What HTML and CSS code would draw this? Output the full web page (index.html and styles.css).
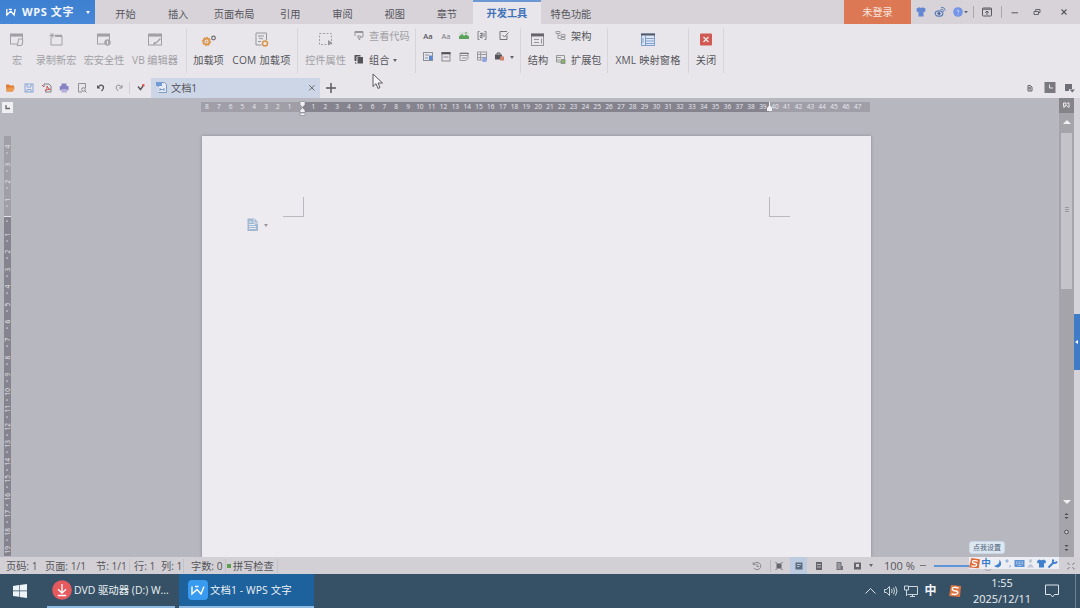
FILE: index.html
```html
<!DOCTYPE html>
<html lang="zh-CN">
<head>
  <meta charset="UTF-8">
  <meta name="viewport" content="width=device-width, initial-scale=1.0">
  <title>文档1 - WPS 文字</title>
  <link rel="stylesheet" href="styles.css">
</head>
<body>
  <div class="app">
    <!-- Title bar -->
    <header class="title-bar">
      <div class="app-button">
        <svg class="app-logo" width="10" height="9" viewBox="0 0 10 9"><path d="M.8 1v6l4-3.700 3.300 3.700L9.200 1M2.800 1.400h3" /></svg>
        <span class="app-name">WPS 文字</span>
        <i class="caret"></i>
      </div>
      <nav class="menu">
        <a class="menu-item">开始</a>
        <a class="menu-item">插入</a>
        <a class="menu-item wide">页面布局</a>
        <a class="menu-item">引用</a>
        <a class="menu-item">审阅</a>
        <a class="menu-item">视图</a>
        <a class="menu-item">章节</a>
        <a class="menu-item active">开发工具</a>
        <a class="menu-item last">特色功能</a>
      </nav>
      <div class="login">未登录</div>
      <div class="window-tools">
        <svg class="shirt" width="20" height="12" viewBox="0 0 20 12"><path d="M5.500 2.500L8.500 1.300q1.500 1.500 3 0L14.500 2.500l-.4 3.500-1.600-.3V10.500h-5V5.700L5.900 6z" fill="#6286d2"/></svg>
        <svg width="18" height="12" viewBox="0 0 18 12" fill="none" stroke="#5c7fb8"><ellipse cx="8" cy="7.500" rx="3.800" ry="2.700" stroke-width="1.300"/><circle cx="8" cy="7.500" r="1.200" fill="#456"/><path d="M9.500 3.500q3-1 3 2.200M10 1.500q4-.5 4 3.200"/></svg>
        <svg width="24" height="12" viewBox="0 0 24 12"><circle cx="9" cy="6" r="4.800" fill="#7295e8"/><path d="M7.700 4.800q1.300-1.800 2.300 0 .2.800-1 1.600V7M9 8v1" fill="none" stroke="#d6e0fa" stroke-width=".8"/><path d="M15 5h4l-2 2.300z" fill="#66646c"/></svg>
        <i class="tool-sep"></i>
        <svg width="27" height="12" viewBox="0 0 27 12" fill="none" stroke="#5a5960"><rect x="8.500" y="2" width="9" height="8" rx=".8"/><path d="M8.500 3.200h9M13 9V5M11.200 6.700l1.800-1.700 1.800 1.700"/></svg>
        <i class="tool-sep"></i>
        <svg width="24" height="12" viewBox="0 0 24 12"><path d="M9.500 6.800H16" stroke="#5a5960"/></svg>
        <svg width="23" height="12" viewBox="0 0 23 12" fill="none" stroke="#5a5960" stroke-width=".9"><path d="M8 5.500h4.500v3H8zM9.700 5.300V3.500h4.300v3h-1.300"/></svg>
        <svg width="30" height="12" viewBox="0 0 30 12"><path d="M12.500 3.500l5 5M17.500 3.500l-5 5" stroke="#55545b" stroke-width="1.100"/></svg>
      </div>
    </header>

    <!-- Ribbon -->
    <section class="ribbon">
      <div class="group macro-group disabled">
        <div class="big-button">
          <svg width="16" height="16" viewBox="0 0 16 16" fill="none" stroke="#a1a0a6"><rect x="1.500" y="2" width="12" height="10"/><path d="M1.500 3.300h12" stroke-width="2.600"/><path d="M9.500 7h4q1 3-1 6.500H8q1.300-2 1.500-6.500z" fill="#e8e6ea"/></svg>
          <span>宏</span>
        </div>
        <div class="big-button record">
          <svg width="16" height="16" viewBox="0 0 16 16" fill="none" stroke="#a1a0a6"><path d="M3 6v7h11V4H8"/><path d="M7 3.800h7" stroke-width="2.200"/><path d="M4 1v5M1.500 3.500h5M2.200 1.700l3.600 3.600M5.800 1.700L2.200 5.300" stroke-width=".9"/></svg>
          <span>录制新宏</span>
        </div>
        <div class="big-button security">
          <svg width="16" height="16" viewBox="0 0 16 16" fill="none" stroke="#a1a0a6"><rect x="1.500" y="2" width="12" height="10"/><path d="M1.500 3.300h12" stroke-width="2.600"/><circle cx="11.500" cy="10.500" r="2.800" fill="#aaa9af"/><path d="M11.500 8.800v3.400" stroke="#e8e6ea"/></svg>
          <span>宏安全性</span>
        </div>
        <div class="big-button editor">
          <svg width="16" height="16" viewBox="0 0 16 16" fill="none" stroke="#a1a0a6"><rect x="1.500" y="2" width="13" height="11"/><path d="M1.500 3.300h13" stroke-width="2.600"/><path d="M13.500 6.500L9 11l-2 1 .7-2" stroke-width="1.300"/></svg>
          <span>VB 编辑器</span>
        </div>
      </div>

      <div class="group addin-group">
        <div class="big-button addin">
          <svg width="16" height="16" viewBox="0 0 16 16" fill="none"><circle cx="5.500" cy="9.500" r="3" stroke="#da954b" stroke-width="1.800"/><circle cx="5.500" cy="9.500" r="4.200" stroke="#da954b" stroke-width="1" stroke-dasharray="1.600 1.600"/><circle cx="5.500" cy="9.500" r="1" fill="#da954b"/><circle cx="12.500" cy="6" r="1.800" stroke="#6d6c73" stroke-width="1.200"/></svg>
          <span>加载项</span>
        </div>
        <div class="big-button com">
          <svg width="16" height="16" viewBox="0 0 16 16" fill="none" stroke="#96959b"><path d="M2 1h10.500v7M2 1v12h5.500M4 4h6M4 9.500h3"/><path d="M5 6l4 1"/><circle cx="11" cy="11.500" r="2.500" stroke="#da954b" stroke-width="1.500"/></svg>
          <span>COM 加载项</span>
        </div>
      </div>

      <div class="group control-group">
        <div class="big-button property disabled">
          <svg width="16" height="16" viewBox="0 0 16 16" fill="none" stroke="#a1a0a6"><rect x="1.500" y="1.500" width="12" height="11" stroke-dasharray="2 1.500"/><path d="M10 8l4.500 3-4.500 2.500z" fill="#96959b" stroke="none"/></svg>
          <span>控件属性</span>
        </div>
        <div class="small-list">
          <div class="small-button disabled">
            <svg width="12" height="12" viewBox="0 0 12 12" fill="none" stroke="#96959b"><path d="M2 6V1.500h8v5.500H8M2 2.500h8"/><path d="M4.500 6h3l-1 4z"/></svg>
            <span>查看代码</span>
          </div>
          <div class="small-button">
            <svg width="12" height="12" viewBox="0 0 12 12"><path d="M1.500 1h6v1.500H3.500V7h-2z" fill="#55545b"/><path d="M4.500 3H10v6.500H4.500z" fill="#55545b"/><path d="M2.500 8v1.500h1" stroke="#77767d" fill="none"/></svg>
            <span>组合</span>
            <i class="caret dark"></i>
          </div>
        </div>
      </div>

      <div class="group widget-group">
        <div class="widget-row">
          <span class="aa strong">Aa</span>
          <span class="aa">Aa</span>
          <svg width="12" height="12" viewBox="0 0 12 12"><path d="M1.500 2h9v7h-9z" fill="#d8dedb"/><path d="M1 9V6.500L4 4l2 2 2-1.500 3 2V9z" fill="#59a35a"/><circle cx="8" cy="2.800" r="1" fill="#8ab07f"/></svg>
          <svg width="12" height="12" viewBox="0 0 12 12" fill="none" stroke="#77767d"><path d="M3.500 1.500h-1.500v8h1.500M8.500 1.500H10v8H8.500M4 3.500h2v2H4.200v2H6M6 2.500v6M8 3v4" stroke-width=".9"/></svg>
          <svg class="check" width="12" height="12" viewBox="0 0 12 12" fill="none" stroke="#67666d"><path d="M9 5.500v4H2v-8h7M4.500 5l2 2 4-4.500" stroke-width=".9"/></svg>
        </div>
        <div class="widget-row">
          <svg width="12" height="12" viewBox="0 0 12 12" fill="none" stroke="#8a9199"><rect x="1.500" y="1.500" width="9" height="8"/><path d="M3 4h4M3 7h3"/><path d="M7 4.500h3.500V9H7z" fill="#5c89d3" stroke="none"/></svg>
          <svg width="12" height="12" viewBox="0 0 12 12" fill="none" stroke="#8a898f"><rect x="2" y="2" width="8" height="8"/><path d="M1.500 2.200h9" stroke="#55545b" stroke-width="2.200"/><path d="M3.500 6h5"/></svg>
          <svg width="12" height="12" viewBox="0 0 12 12" fill="none" stroke="#99989e"><path d="M2 2h8v5.500L8 9.500H2zM2 4.500h8M4 7h5"/><path d="M2 2.500h9" stroke="#77767d"/></svg>
          <svg width="12" height="12" viewBox="0 0 12 12" fill="none" stroke="#99989e"><rect x="1.500" y="1" width="9" height="8"/><path d="M1.500 3.500h9M1.500 6.500h9M4.500 1v8"/><path d="M6.500 6.500h4v4.500h-4z" fill="#8ea5e0" stroke="none"/></svg>
          <svg class="tools" width="12" height="12" viewBox="0 0 12 12"><path d="M1 3.500h7v5H1z" fill="#55545b"/><path d="M3 3.500V2h3v1.500" fill="none" stroke="#55545b"/><path d="M6 5.500h4v4H6z" fill="#cf8068"/></svg>
          <i class="caret dark"></i>
        </div>
      </div>

      <div class="group schema-group">
        <div class="big-button structure">
          <svg width="16" height="16" viewBox="0 0 16 16" fill="none" stroke="#96959b"><rect x="1.500" y="2" width="12" height="11.500"/><path d="M1 3h13" stroke="#66656c" stroke-width="2.800"/><path d="M4 7.500h5M4 10.500h5M11.500 6.500v5"/></svg>
          <span>结构</span>
        </div>
        <div class="small-list">
          <div class="small-button">
            <svg width="12" height="12" viewBox="0 0 12 12" fill="none" stroke="#96959b" stroke-width=".9"><path d="M1 1.500h4v2H1zM3 3.500v5h3M3 5.500h2M6 4.500h4v2H6zM6 7.500h4v2H6z"/></svg>
            <span>架构</span>
          </div>
          <div class="small-button">
            <svg width="12" height="12" viewBox="0 0 12 12" fill="none" stroke="#8b9089" stroke-width=".9"><path d="M6 8H1.500V1.500h8V5M2 3.500h4M2 6h3"/><path d="M6 5.500h4v4H6z" fill="#85b165"/></svg>
            <span>扩展包</span>
          </div>
        </div>
      </div>

      <div class="group xml-group">
        <div class="big-button">
          <svg width="16" height="16" viewBox="0 0 16 16" fill="none" stroke="#7f9fce"><rect x="1.500" y="2" width="13" height="11.500" fill="#dfe6f3"/><path d="M1 2.500h14" stroke="#515968" stroke-width="2"/><path d="M5.500 4v9M6 6.500h8M6 9h8M6 11.500h8M3 6v5"/></svg>
          <span>XML 映射窗格</span>
        </div>
      </div>
      <div class="group close-group">
        <div class="big-button">
          <svg width="16" height="16" viewBox="0 0 16 16"><rect x="2" y="1.500" width="12" height="12" rx="1" fill="#d05a52"/><path d="M5.500 5l5 5M10.500 5l-5 5" stroke="#f0e6e8" stroke-width="1.400"/></svg>
          <span>关闭</span>
        </div>
      </div>
    </section>

    <!-- Quick access and document tabs -->
    <section class="tab-row">
      <div class="quick-access">
        <svg width="18" height="12" viewBox="0 0 18 12"><path d="M5 2.500h3l1 1h4v2l-2 4H5.500z" fill="#dc7c35"/><path d="M7 5.500h7l-2 4H5.500z" fill="#eb9a4e"/></svg>
        <svg width="18" height="12" viewBox="0 0 18 12" fill="none" stroke="#8aa6da"><rect x="6" y="2" width="8" height="8"/><path d="M8 2v3h4V2M8 10V7.500h4V10"/></svg>
        <svg width="18" height="12" viewBox="0 0 18 12" fill="none" stroke="#77767d" stroke-width=".9"><path d="M7 5V2h5l2 2v6H8"/><path d="M8 9q3-3 2-5 1 3 3.500 3.500Q10 7 8 9M5 3l2 2" stroke="#bf4b49"/></svg>
        <svg width="18" height="12" viewBox="0 0 18 12"><path d="M6.500 1.500h5v2.500h-5zM4.800 4h8.700v4.300H4.800z" fill="#8681c2"/><path d="M6.500 7H12v3.500H6.500z" fill="#b4aedd"/></svg>
        <svg width="18" height="12" viewBox="0 0 18 12" fill="none" stroke="#85848a"><path d="M12.500 6V1.500h-7v8.500H9" stroke-width=".9"/><circle cx="10.500" cy="7.500" r="1.800"/><path d="M12 9l1.500 1.500"/></svg>
        <svg width="18" height="12" viewBox="0 0 18 12" fill="none" stroke="#55545b" stroke-width="1.300"><path d="M7 5.500q2.500-4 5-1.500 1.500 2-1.500 5"/><path d="M6 3v3.500h3.500z" fill="#55545b" stroke="none"/></svg>
        <svg width="18" height="12" viewBox="0 0 18 12" fill="none" stroke="#8f8e95"><path d="M12.500 5.500q-2.500-4-5-1.500-1.500 2 1.500 5M13 3v3h-3"/></svg>
      </div>
      <div class="check-tool">
        <svg width="12" height="12" viewBox="0 0 12 12"><path d="M4 4.500l2.500 3L9 4" fill="none" stroke="#55545b" stroke-width="1.400"/><circle cx="9.300" cy="3.200" r="1.300" fill="#d9504c"/></svg>
      </div>
      <div class="doc-tab">
        <svg width="13" height="13" viewBox="0 0 13 13" fill="none" stroke="#7d9ac4"><path d="M3.500 6V1.500h6l2 2v8h-8" fill="#e6ebf4"/><path d="M1 1h6v4H1z" fill="#709bd5" stroke="none"/><path d="M5 7v3M5 8.500h4M9 7v3"/></svg>
        <span class="doc-name">文档1</span>
        <svg class="doc-close" width="8" height="8" viewBox="0 0 8 8"><path d="M1.200 1.200l5.200 5.200M6.400 1.200L1.200 6.400" stroke="#66656c"/></svg>
      </div>
      <svg class="new-tab" width="12" height="12" viewBox="0 0 12 12"><path d="M6 1v10M1 6h10" stroke="#5b5a61" stroke-width="1.500"/></svg>
      <div class="tab-tools">
        <svg width="20" height="12" viewBox="0 0 20 12" fill="none" stroke="#66656c"><path d="M8 3.500h2.500L12 5v4H8zM8 6h3M10 4.500v4"/></svg>
        <svg width="20" height="12" viewBox="0 0 20 12"><path d="M4.500 0h11v11h-11z" fill="#7a7980"/><path d="M9.500 2.500V6h3.500" fill="none" stroke="#e4e3e8"/></svg>
        <svg width="20" height="12" viewBox="0 0 20 12" fill="#6f6e76"><path d="M5 2h7v5H9v2H5zM9.500 7.500h5.500l-2.700 3z"/></svg>
      </div>
    </section>

    <!-- Workspace -->
    <main class="workspace">
      <aside class="left-column">
        <div class="tab-stop"><svg width="11" height="11" viewBox="0 0 11 11"><path d="M4 3v3.500h4" fill="none" stroke="#66656c" stroke-width="1.300"/></svg></div>
        <div class="v-ruler" id="vRuler"></div>
      </aside>
      <div class="canvas">
        <div class="h-ruler">
          <div class="ruler-margin" id="rulerLeft"></div>
          <div class="ruler-text" id="rulerText"></div>
          <div class="ruler-margin right" id="rulerRight"></div>
          <svg class="indent-left" width="7" height="15" viewBox="0 0 7 15" fill="#f1f0f4" stroke="#77767f" stroke-width=".5"><path d="M1 .5h5v3L3.500 6.500 1 3.500zM3.500 6.500L6 9.500v2H1v-2zM1 12h5v2.500H1z"/></svg>
          <svg class="indent-right" width="7" height="9" viewBox="0 0 7 9" fill="#f1f0f4"><path d="M3.500 3L6 6v3H1V6zM3 0h1v4H3z"/></svg>
        </div>
        <div class="page">
          <div class="corners">
            <i class="corner left"></i>
            <i class="corner right"></i>
          </div>
          <div class="paste-hint">
            <svg width="12" height="14" viewBox="0 0 12 14"><path d="M.5.5H7.500L11 4v9H.5z" fill="#a3b9d2"/><path d="M2 4h3M2 6.500h6M2 8.500h7M2 10.500h7M7 1v4h4" fill="none" stroke="#edf0f5" stroke-width=".9"/></svg>
            <i class="caret hint"></i>
          </div>
        </div>
      </div>
      <div class="scroll-bar">
        <div class="scroll-top"><svg width="9" height="9" viewBox="0 0 9 9" fill="none" stroke="#eeedf1"><path d="M1.500 2h2.500v3H1.500zM5 2h2v4.500M4.500 4.500l2 2M2 5v2"/></svg></div>
        <div class="scroll-arrow up"></div>
        <div class="thumb"><i></i><i></i><i></i></div>
        <div class="scroll-arrow down"></div>
        <div class="browse">
          <svg width="7" height="8" viewBox="0 0 7 8" fill="#4d4c53"><path d="M3.500 1l2 2h-4zM3.500 7l-2-2h4z"/></svg>
          <svg width="7" height="8" viewBox="0 0 7 8"><circle cx="3.500" cy="4" r="1.800" fill="#d3d2d7" stroke="#4d4c53"/></svg>
          <svg width="7" height="8" viewBox="0 0 7 8" fill="#4d4c53"><path d="M3.500 3l-2-2h4zM3.500 7l-2-2h4z"/></svg>
        </div>
      </div>
      <div class="side-strip"><div class="side-handle"><svg width="6" height="6" viewBox="0 0 6 6"><path d="M1 3l3-2v4z" fill="#fff"/></svg></div></div>
    </main>

    <!-- Status bar -->
    <footer class="status-bar">
      <div class="status-info">
        <span class="page-no">页码: 1</span>
        <span class="page-total">页面: 1/1</span>
        <span class="section-no">节: 1/1</span>
        <span class="row-no">行: 1</span>
        <span class="col-no">列: 1</span>
        <span class="words">字数: 0</span>
        <span class="spell"><i class="green-dot"></i>拼写检查</span>
      </div>
      <div class="view-tools">
        <svg class="history" width="25" height="12" viewBox="0 0 25 12" fill="none" stroke="#85848a"><path d="M8 4a4 3.800 0 1 1 0 4M7.500 2v2.500H10M11.500 3.500V6.500h2"/></svg>
        <svg width="19" height="12" viewBox="0 0 19 12"><path d="M5.500 3.500h5v5h-5z" fill="#66656c"/><path d="M4.500 2l1.500 1.500M11.500 2L10 3.500M4.500 10L6 8.500M11.500 10L10 8.500" stroke="#66656c"/></svg>
        <div class="view-active"><svg width="12" height="12" viewBox="0 0 12 12"><path d="M2.500 2.500h7v7h-7z" fill="#5a6b80"/><path d="M4 4.500h4M4 6.500h2.500" stroke="#c9d7ea" stroke-width=".8"/></svg></div>
        <svg width="23" height="12" viewBox="0 0 23 12"><path d="M9 2h6v8H9z" fill="#66656c"/><path d="M10 4.500h4M10 7h4" stroke="#d0ced4" stroke-width=".8"/></svg>
        <svg width="18" height="12" viewBox="0 0 18 12"><path d="M6.500 2h5v4H13v4H6.500z" fill="#76757c"/><path d="M7.500 4h3M7.500 6h3M7.500 8h3" stroke="#d0ced4" stroke-width=".8"/></svg>
        <svg width="18" height="12" viewBox="0 0 18 12"><path d="M6 2.500h7v7H6z" fill="#66656c"/><path d="M8 4h3v3H8z" fill="#d6d4da"/></svg>
        <i class="caret dark"></i>
        <span class="zoom-value">100 %</span>
        <span class="zoom-out"></span>
        <span class="zoom-line"></span>
        <span class="zoom-knob"></span>
        <svg class="zoom-end" width="10" height="10" viewBox="0 0 10 10"><path d="M1.500 2l2 1.500M8.500 2l-2 1.500M1.500 8l2-1.500M8.500 8l-2-1.500" stroke="#69686f"/></svg>
      </div>
    </footer>

    <!-- Windows taskbar -->
    <footer class="taskbar">
      <div class="start"><svg width="14" height="14" viewBox="0 0 14 14" fill="#edf3f7"><path d="M0 2l6-.9v5.500H0zM6.600 1L14 0v6.600H6.600zM0 7.300h6v5.500L0 12zM6.600 7.300H14V14l-7.400-1z"/></svg></div>
      <div class="task">
        <svg width="20" height="20" viewBox="0 0 20 20"><circle cx="10" cy="10" r="9.800" fill="#e65a5e"/><path d="M10 4v9M6 9.200l4 3.800 4-3.800M5.800 15.500h8.400" fill="none" stroke="#fff" stroke-width="1.300"/></svg>
        <span>DVD 驱动器 (D:) W...</span>
      </div>
      <div class="task active">
        <svg width="20" height="20" viewBox="0 0 20 20"><rect width="20" height="20" rx="4" fill="#389bf0"/><path d="M4 6.500v7.500l5-4.500 4 4.500 3-7.500M7 6.500h3.500" fill="none" stroke="#fff" stroke-width="1.400"/></svg>
        <span>文档1 - WPS 文字</span>
      </div>
      <div class="tray">
        <svg width="20" height="16" viewBox="0 0 20 16"><path d="M5.500 10.500l5-5 5 5" fill="none" stroke="#dce5ec"/></svg>
        <svg width="20" height="16" viewBox="0 0 20 16" fill="none" stroke="#dce5ec" stroke-width=".9"><path d="M4.500 6.500h2l3-3v9l-3-3h-2zM11.500 6q1.300 2 0 4M13.500 4.700q2 3.300 0 6.600M15.500 3.500q3 4.500 0 9"/></svg>
        <svg width="21" height="16" viewBox="0 0 21 16" fill="none" stroke="#dce5ec" stroke-width=".9"><path d="M8 3.500h9.500v8H7.500M12.500 11.500v2M10 13.500h5M4.500 3h4v4h-4zM6.500 7v6"/></svg>
        <span class="ime-mode">中</span>
        <svg class="sogou" width="14" height="14" viewBox="0 0 14 14"><path d="M3 1l10 1-1 11-11-1z" fill="#de743f"/><path d="M10.500 4Q4 2 4.300 5.500 5 7 8 7q2.500.5 1.500 2.500Q8 11 3.500 10" fill="none" stroke="#fff" stroke-width="1.500"/></svg>
        <div class="clock"><span>1:55</span><span>2025/12/11</span></div>
        <svg class="notice" width="16" height="16" viewBox="0 0 16 16"><path d="M1.500 2h13v9.500H10.500L8.500 14l-2-2.500h-5z" fill="none" stroke="#dce5ec"/></svg>
        <i class="show-desktop"></i>
      </div>
    </footer>

    <!-- Input method bar floats over the status bar -->
    <div class="ime-tip">点我设置</div>
    <div class="ime-bar">
      <svg width="11" height="11" viewBox="0 0 14 14"><path d="M3 0l11 1.500L12.500 13 0 12z" fill="#de6b36"/><path d="M11 4Q4 2 4.300 5.500 5 7 8 7q2.500.5 1.500 2.500Q8 11 3 10" fill="none" stroke="#fff" stroke-width="1.600"/></svg>
      <span>中</span>
      <svg width="11" height="11" viewBox="0 0 11 11"><path d="M7.500 1.500q.5 5-5.500 6.500 3 2.500 6 .5 2.500-3-.5-7z" fill="#4582ce"/></svg>
      <svg width="11" height="11" viewBox="0 0 11 11" fill="none" stroke="#78a3d8"><circle cx="4" cy="3" r="1.100"/><path d="M7 7q1 1-.5 2.500"/></svg>
      <svg width="11" height="11" viewBox="0 0 11 11"><rect x=".5" y="2" width="10" height="7" fill="#5b91d2"/><path d="M2 4h7M2 5.700h7M3.500 7.500h4" stroke="#e3ecf7" stroke-width=".7" stroke-dasharray="1 .5"/></svg>
      <svg width="11" height="11" viewBox="0 0 11 11" fill="#bfc7d6"><circle cx="5.500" cy="3" r="1.700"/><path d="M2 9.500q3.500-7 7 0z"/></svg>
      <svg width="11" height="11" viewBox="0 0 11 11"><path d="M1 3l2.500-1.500q2 1.500 4 0L10 3 9.500 5.500 8 5v4.500H3V5l-1.500.5z" fill="#3f7fcb"/></svg>
      <svg width="11" height="11" viewBox="0 0 11 11" fill="none" stroke="#3f7fcb" stroke-width="1.900"><path d="M1.500 9.500l5-5M6.500 1.500q-1.500 3 .5 3.500 2 .5 3-1.500" /></svg>
    </div>

    <svg class="cursor" width="12" height="17" viewBox="0 0 12 17"><path d="M1 1v12.500l3-2.800 2 4.800 2-1-2-4.500h4.500z" fill="#f4f3f6" stroke="#5b5a61"/></svg>
  </div>

  <script>
    function addMarks(id, from, to, step) {
      const ruler = document.getElementById(id);
      for (let n = from; step > 0 ? n <= to : n >= to; n += step) {
        const mark = document.createElement('span');
        mark.textContent = n === 0 ? '' : Math.abs(n);
        ruler.appendChild(mark);
      }
    }

    addMarks('rulerLeft', 8, 1, -1);
    addMarks('rulerText', 1, 39, 1);
    addMarks('rulerRight', 40, 47, 1);
    // 0 is the top margin line, so it stays blank
    addMarks('vRuler', -4, 19, 1);
  </script>
</body>
</html>
```
FILE: styles.css
```css
* {
  box-sizing: border-box;
}
body {
  margin: 0;
  overflow: hidden;
  font-family: "Open Sans", "Noto Sans CJK SC", sans-serif;
  font-size: 10.2px;
  line-height: 14px;
  color: #55545a;
  background: #b7b7c0;
}
svg {
  display: block;
  flex: none;
}
.app {
  position: relative;
  display: flex;
  flex-direction: column;
  width: 1080px;
  height: 608px;
  white-space: nowrap;
}
.caret {
  flex: none;
  border: 2px solid transparent;
  border-top: 3px solid #fff;
  border-bottom: 0;
}
.caret.dark {
  border-top-color: #66656c;
}
.caret.hint {
  border-top-color: #99989f;
}

/* Title bar */
.title-bar {
  display: flex;
  height: 24px;
  background: #d7d3d9;
}
.app-button {
  display: flex;
  align-items: center;
  width: 95px;
  padding: 0 5px 0 6px;
  background: linear-gradient(#3d7fd0, #4789d7);
  color: #f2f6fc;
  font-weight: bold;
  font-size: 11px;
  letter-spacing: 0.6px;
}
.app-logo {
  fill: none;
  stroke: #fff;
  stroke-width: 1.3;
}
.app-name {
  flex: 1;
  margin-left: 6px;
}
.menu {
  display: flex;
  flex: 1;
  padding-left: 4px;
}
.menu-item {
  width: 52.2px;
  padding-top: 7px;
  text-align: center;
}
.menu-item:first-child {
  width: 53px;
}
.menu-item.wide {
  width: 60px;
}
.menu-item.active {
  width: 68px;
  padding-top: 4px;
  border-top: 2px solid #6c98d4;
  background: #e9e6eb;
  color: #3f72b8;
  font-weight: bold;
}
.menu-item.last {
  width: 60px;
}
.login {
  width: 67px;
  padding-top: 5px;
  background: #dd7855;
  color: #f6e4dd;
  text-align: center;
}
.window-tools {
  display: flex;
  align-items: center;
  width: 169px;
}
.tool-sep {
  width: 1px;
  height: 12px;
  background: #aaa8ae;
}

/* Ribbon */
.ribbon {
  display: flex;
  height: 53px;
  padding-top: 4px;
  background: #e8e6ea;
}
.group {
  display: flex;
  height: 45px;
  border-right: 1px solid #d7d5da;
}
.disabled {
  color: #a09fa5;
}
.big-button {
  display: flex;
  flex-direction: column;
  align-items: center;
  width: 34px;
  padding-top: 4px;
}
.big-button span {
  margin-top: 5px;
}
.record {
  width: 44px;
}
.security {
  width: 52px;
}
.editor {
  width: 50px;
}
.macro-group {
  width: 187px;
}
.addin-group {
  width: 111px;
}
.addin {
  width: 43px;
}
.com {
  width: 63px;
  letter-spacing: 0.25px;
}
.control-group {
  width: 118px;
}
.property {
  width: 55px;
}
.small-list {
  display: flex;
  flex-direction: column;
  gap: 10px;
  padding-top: 1px;
}
.small-button {
  display: flex;
  align-items: center;
  gap: 4px;
  height: 14px;
}
.widget-group {
  flex-direction: column;
  gap: 9px;
  width: 105px;
  padding: 2px 0 0 6px;
}
.widget-row {
  display: flex;
  align-items: center;
  gap: 6px;
  height: 12px;
}
.aa {
  width: 12px;
  color: #77767d;
  font-size: 7.5px;
  text-align: center;
}
.aa.strong {
  color: #55545a;
  font-weight: 600;
}
.check {
  margin-left: 4px;
}
.tools + .caret {
  margin-left: -2px;
}
.schema-group {
  width: 87px;
}
.structure {
  width: 34px;
}
.xml-group {
  width: 81px;
}
.xml-group .big-button {
  width: 80px;
  letter-spacing: 0.15px;
}
.close-group {
  width: 35px;
}

/* Quick access and document tabs */
.tab-row {
  display: flex;
  align-items: center;
  height: 21px;
  background: #e8e6ea;
}
.quick-access {
  display: flex;
  width: 130px;
  padding-left: 1px;
  border-right: 1px solid #d3d1d6;
}
.check-tool {
  display: flex;
  width: 21px;
  padding-left: 4px;
}
.doc-tab {
  display: flex;
  align-items: center;
  width: 169px;
  height: 20px;
  padding: 0 4px;
  background: #cdd6e7;
}
.doc-name {
  flex: 1;
  margin-left: 3px;
}
.new-tab {
  margin-left: 5px;
}
.tab-tools {
  display: flex;
  margin-left: auto;
}

/* Workspace */
.workspace {
  display: flex;
  height: 459px;
  background: #b7b7c0;
}
.left-column {
  width: 201px;
  padding: 4px 0 0 2px;
}
.tab-stop {
  width: 11px;
  height: 11px;
  background: #efeef2;
}
.v-ruler {
  display: flex;
  flex-direction: column;
  width: 7px;
  height: 420px;
  margin: 23px 0 0 2px;
  padding-top: 4px;
  overflow: hidden;
  background: linear-gradient(#a09fa8 80px, #e5e4e9 80px, #e5e4e9 81px, #85848e 81px);
  color: #e9e8ed;
  font-size: 6.5px;
  line-height: 7px;
}
.v-ruler span {
  display: flex;
  align-items: center;
  justify-content: center;
  flex: none;
  height: 17.55px;
  writing-mode: vertical-rl;
  transform: rotate(180deg);
}
.v-ruler span::before {
  content: "";
  width: 2px;
  height: 1px;
  margin-bottom: 4px;
  background: #d5d4da;
}
.canvas {
  width: 858px;
  padding-top: 4px;
}
.h-ruler {
  position: relative;
  display: flex;
  width: 669px;
  height: 10px;
  color: #eae9ee;
  font-size: 6.5px;
  line-height: 10px;
}
.h-ruler span {
  flex: none;
  width: 11.83px;
  text-align: center;
}
.ruler-margin {
  display: flex;
  width: 101px;
  background: #a09fa8;
}
.ruler-text {
  display: flex;
  width: 467px;
  padding-left: 5.5px;
  background: #85848e;
}
.indent-left {
  position: absolute;
  left: 98px;
  top: -1px;
}
.indent-right {
  position: absolute;
  left: 565px;
  top: 0;
}
.page {
  width: 669px;
  height: 421px;
  margin: 24px 0 0 1px;
  padding: 61px 81px 0;
  background: #edebf0;
  box-shadow: 0 0 3px rgba(70, 70, 85, 0.4);
  clip-path: inset(-4px -4px 0 -4px);
}
.corners {
  display: flex;
  justify-content: space-between;
}
.corner {
  width: 21px;
  height: 20px;
  border-bottom: 1px solid #bbb9bf;
}
.corner.left {
  border-right: 1px solid #bbb9bf;
}
.corner.right {
  border-left: 1px solid #bbb9bf;
}
.paste-hint {
  display: flex;
  align-items: center;
  gap: 5px;
  margin: 1px 0 0 -36px;
}

.scroll-bar {
  display: flex;
  flex-direction: column;
  align-items: center;
  width: 15px;
  background: #a5a4ab;
}
.scroll-top {
  display: flex;
  align-items: center;
  justify-content: center;
  width: 15px;
  height: 15px;
  background: #85848b;
}
.scroll-arrow {
  border: 4px solid transparent;
}
.scroll-arrow.up {
  margin-top: 4px;
  border-top-width: 3px;
  border-bottom-color: #f1f0f4;
}
.scroll-arrow.down {
  margin-top: 211px;
  border-top-color: #f1f0f4;
}
.thumb {
  display: flex;
  flex-direction: column;
  align-items: center;
  justify-content: center;
  gap: 1px;
  width: 11px;
  height: 156px;
  margin-top: 9px;
  padding-bottom: 3px;
  background: #c4c3ca;
}
.thumb i {
  width: 4px;
  height: 1px;
  background: #98979e;
}
.browse {
  display: flex;
  flex-direction: column;
  gap: 8px;
  margin-top: 4px;
}
.side-strip {
  width: 6px;
  padding-top: 216px;
  background: #d5d3d9;
}
.side-handle {
  display: flex;
  align-items: center;
  height: 56px;
  background: #3e7cc6;
}

/* Status bar */
.status-bar {
  display: flex;
  justify-content: space-between;
  height: 17px;
  background: #d2d0d5;
}
.status-info {
  display: flex;
  align-items: center;
  padding: 1px 0 0 6px;
}
.page-no {
  width: 39px;
}
.page-total {
  width: 51px;
}
.section-no {
  width: 34px;
}
.section-no,
.col-no,
.words,
.spell {
  border-right: 1px solid #c4c2c7;
}
.row-no {
  width: 27px;
  padding-left: 4px;
}
.col-no {
  width: 27px;
  padding-left: 4px;
}
.words {
  width: 42px;
  padding-left: 7px;
}
.spell {
  display: flex;
  align-items: center;
  gap: 2px;
  width: 52px;
  padding-left: 1px;
}
.green-dot {
  width: 4px;
  height: 4px;
  background: #56a34c;
}
.view-tools {
  display: flex;
  align-items: center;
  width: 334px;
}
.history {
  border-right: 1px solid #bbb9be;
}
.view-active {
  display: flex;
  align-items: center;
  justify-content: center;
  width: 17px;
  height: 17px;
  background: #bdcbe0;
}
.view-tools .caret {
  margin-left: 3px;
}
.zoom-value {
  width: 36px;
  margin-left: 11px;
  font-size: 11px;
}
.zoom-out {
  width: 6px;
  height: 1px;
  background: #77767d;
}
.zoom-line {
  width: 49px;
  height: 2px;
  margin-left: 8px;
  background: #5e93d8;
}
.zoom-knob {
  width: 10px;
  height: 10px;
  border: 1px solid #a09fa6;
  border-radius: 50%;
}
.zoom-end {
  margin-left: auto;
  margin-right: 4px;
}

/* Windows taskbar */
.taskbar {
  display: flex;
  height: 34px;
  background: #365165;
  color: #edf2f6;
}
.start {
  width: 47px;
  padding: 10px 0 0 13px;
}
.task {
  display: flex;
  align-items: center;
  gap: 2px;
  width: 128px;
  margin-right: 4px;
  padding-left: 5px;
  border-bottom: 2px solid #8fbbe2;
  font-size: 10.4px;
}
.task.active {
  width: 135px;
  margin-right: 0;
  padding-left: 9px;
  background: #1d619d;
  letter-spacing: 0.1px;
}
.tray {
  display: flex;
  align-items: center;
  margin-left: auto;
}
.ime-mode {
  width: 19px;
  font-size: 12px;
  font-weight: bold;
  text-align: center;
}
.sogou {
  margin-left: 8px;
}
.clock {
  display: flex;
  flex-direction: column;
  align-items: center;
  width: 72px;
  margin-left: 4px;
  font-size: 10.9px;
  line-height: 16px;
}
.notice {
  margin-left: 6px;
}
.show-desktop {
  width: 16px;
  height: 34px;
  border-right: 1px solid #71828f;
  margin-right: 4px;
}

/* Input method bar */
.ime-tip {
  position: absolute;
  left: 969px;
  top: 541px;
  width: 36px;
  height: 13px;
  border: 1px solid #c9d7e5;
  border-radius: 3px;
  background: #dce7f1;
  color: #4d6176;
  font-size: 7px;
  line-height: 11px;
  text-align: center;
}
.ime-bar {
  position: absolute;
  left: 969px;
  top: 557px;
  display: flex;
  align-items: center;
  width: 90px;
  height: 12px;
  background: #eceef4;
  color: #3579ca;
  font-size: 9.5px;
  font-weight: bold;
}
.ime-bar span {
  width: 12px;
  line-height: 12px;
  text-align: center;
}
.cursor {
  position: absolute;
  left: 372px;
  top: 73px;
}
```
